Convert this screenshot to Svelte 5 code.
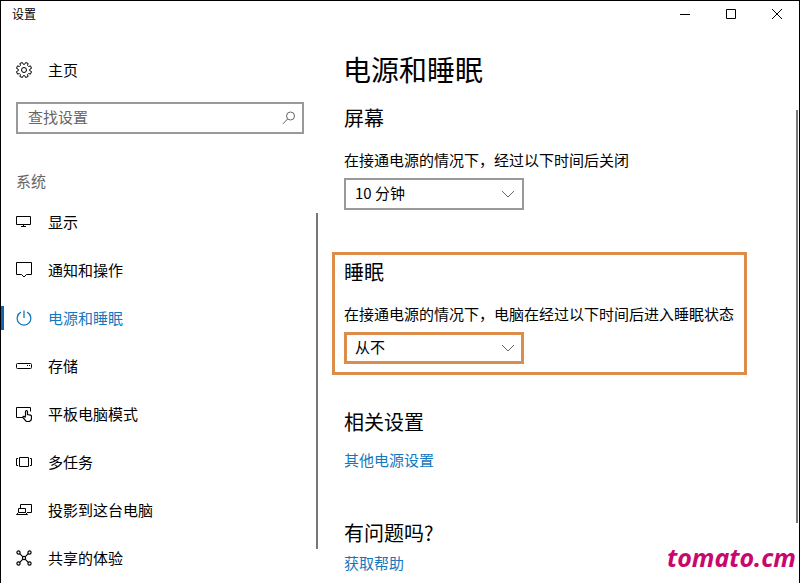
<script>
  let query = $state('');
  let screenOff = $state('10 分钟');
  let sleepAfter = $state('从不');
  let active = $state('power');

  const items = [
    { id: 'display', label: '显示' },
    { id: 'notify', label: '通知和操作' },
    { id: 'power', label: '电源和睡眠' },
    { id: 'storage', label: '存储' },
    { id: 'tablet', label: '平板电脑模式' },
    { id: 'multitask', label: '多任务' },
    { id: 'project', label: '投影到这台电脑' },
    { id: 'shared', label: '共享的体验' }
  ];
  const times = ['10 分钟', '15 分钟', '30 分钟', '从不'];
  const gear = Array.from({ length: 8 }, (_, i) => i)
    .flatMap((i) =>
      [[-15, 5.8], [-10, 7.7], [10, 7.7], [15, 5.8]].map(([d, r]) => {
        const a = ((i * 45 + 22.5 + d) * Math.PI) / 180;
        return `${(8 + r * Math.cos(a)).toFixed(2)},${(8 + r * Math.sin(a)).toFixed(2)}`;
      })
    )
    .join(' ');
</script>

{#snippet icon(id)}
  <svg class="icon" viewBox="0 0 16 16" aria-hidden="true">
    {#if id === 'home'}
      <polygon points={gear} stroke-linejoin="round" />
      <circle cx="8" cy="8" r="2.5" />
    {:else if id === 'display'}
      <path d="M.5 2.5h14v8H.5zM7.5 10.500v2M5 12.500h5" />
    {:else if id === 'notify'}
      <path d="M.5 .5h15v12H10.500l-2.500 2.500-2.500-2.500H.5z" />
    {:else if id === 'power'}
      <path d="M8 .5v7.500M5 2.200a6.800 6.800 0 1 0 6 0" stroke-width="1.300" />
    {:else if id === 'storage'}
      <rect x=".5" y="5.500" width="15" height="5" rx="1" />
      <path d="M11 7.500h1M13 7.500h1" />
    {:else if id === 'tablet'}
      <path d="M7 11.500H.5v-10h14v4" />
      <path d="M9.500 10.500V5.500q0-1 1-1t1 1v3l3 .6q1 .3 1 1.400v2q0 3-3 3h-1q-1.500 0-2.300-1.300L7 11.600q-.3-1 .6-1.200.8-.1 1.900 1.100" stroke-width="1.200" />
    {:else if id === 'multitask'}
      <path d="M3.500 3.500h9v9h-9zM2 4.500H.5v7H2M14 4.500h1.500v7H14" />
    {:else if id === 'project'}
      <path d="M4.500 6.500v-4h11v8H11M2.500 6.500h7v4h-7zM2.500 10.500L.5 12.500h11L9.500 10.500" />
    {:else}
      <g stroke-width="1.200">
        <path d="M3.700 3.700l3 3M12.300 3.700L9.300 6.700M3.700 12.300l3-3M12.300 12.300L9.300 9.300" />
        <circle cx="8" cy="8" r="1.600" />
        <circle cx="2.500" cy="2.500" r="1.600" />
        <circle cx="13.500" cy="2.500" r="1.600" />
        <circle cx="2.500" cy="13.500" r="1.600" />
        <circle cx="13.500" cy="13.500" r="1.600" />
      </g>
    {/if}
  </svg>
{/snippet}

{#snippet chevron()}
  <svg class="chevron" viewBox="0 0 14 8" aria-hidden="true"><path d="M1 1l6 6 6-6" /></svg>
{/snippet}

<div class="window">
  <header>
    <span class="caption">设置</span>
    <button aria-label="最小化"><svg viewBox="0 0 10 10"><path d="M0 5.500h10" /></svg></button>
    <button aria-label="最大化"><svg viewBox="0 0 10 10"><path d="M.5 .5h9v9h-9z" /></svg></button>
    <button aria-label="关闭"><svg viewBox="0 0 10 10"><path d="M0 0l10 10M10 0L0 10" /></svg></button>
  </header>

  <div class="body">
    <aside>
      <a class="row home" href="#home">{@render icon('home')}<span>主页</span></a>
      <div class="search">
        <input type="text" placeholder="查找设置" aria-label="查找设置" bind:value={query} />
        <svg viewBox="0 0 14 14" aria-hidden="true"><circle cx="8.500" cy="5" r="4" /><path d="M5.700 7.900L.8 13" /></svg>
      </div>
      <h2 class="group">系统</h2>
      <div class="list">
        <nav>
          {#each items as item}
            <a
              class="row"
              class:active={active === item.id}
              href={'#' + item.id}
              onclick={() => (active = item.id)}
            >{@render icon(item.id)}<span>{item.label}</span></a>
          {/each}
        </nav>
        <div class="thumb"></div>
      </div>
    </aside>

    <main>
      <div class="content">
        <h1>电源和睡眠</h1>
        <section>
          <h2>屏幕</h2>
          <label for="screen">在接通电源的情况下，经过以下时间后关闭</label>
          <div class="field">
            <select id="screen" bind:value={screenOff}>
              {#each times as t}<option>{t}</option>{/each}
            </select>
            {@render chevron()}
          </div>
        </section>
        <section class="marked">
          <h2>睡眠</h2>
          <label for="sleep">在接通电源的情况下，电脑在经过以下时间后进入睡眠状态</label>
          <div class="field">
            <select id="sleep" bind:value={sleepAfter}>
              {#each times as t}<option>{t}</option>{/each}
            </select>
            {@render chevron()}
          </div>
        </section>
        <section class="related">
          <h2>相关设置</h2>
          <a href="#more">其他电源设置</a>
        </section>
        <section class="help">
          <h2>有问题吗?</h2>
          <a href="#help">获取帮助</a>
        </section>
      </div>
      <div class="thumb"></div>
    </main>
  </div>
  <div class="watermark">tomato.cm</div>
</div>

<style>
  .window {
    position: relative;
    box-sizing: border-box;
    height: 100vh;
    display: flex;
    flex-direction: column;
    overflow: hidden;
    border: 1px solid #000;
    border-bottom: 0;
    background: #fff;
    color: #000;
    font: 15px/20px 'Noto Sans CJK SC', sans-serif;
  }
  h1, h2 { margin: 0; font-weight: 400; }
  a { color: #1478be; text-decoration: none; }
  svg { fill: none; stroke: currentColor; stroke-width: 1; flex: none; }

  header { display: flex; align-items: center; height: 26px; flex: none; }
  .caption { flex: 1; padding-left: 11px; font-size: 12px; }
  header button {
    box-sizing: border-box;
    width: 46px;
    height: 26px;
    padding: 0 0 0 2px;
    border: 0;
    background: none;
    color: #000;
    display: flex;
    align-items: center;
    justify-content: center;
  }
  header svg { width: 10px; height: 10px; }

  .body { flex: 1; min-height: 0; display: flex; }
  aside {
    width: 317px;
    flex: none;
    display: flex;
    flex-direction: column;
    min-height: 0;
  }
  .row {
    display: flex;
    align-items: center;
    gap: 16px;
    height: 48px;
    box-sizing: border-box;
    padding-left: 12px;
    border-left: 3px solid transparent;
    color: #000;
    flex: none;
  }
  .home { margin-top: 19px; }
  .icon { width: 16px; height: 16px; }
  .active {
    color: #1478be;
    border-image: linear-gradient(transparent 12px, #1464b4 12px, #1464b4 36px, transparent 36px) 0 0 0 3;
  }
  .search {
    margin: 8px 14px 0 15px;
    height: 32px;
    box-sizing: border-box;
    border: 2px solid #999;
    display: flex;
    align-items: center;
    padding: 0 6px 0 10px;
    flex: none;
  }
  .search input {
    flex: 1;
    min-width: 0;
    padding: 0 0 2px;
    border: 0;
    outline: 0;
    background: none;
    font: inherit;
    color: #000;
  }
  .search input::placeholder { color: #666; opacity: 1; }
  .search svg { width: 14px; height: 14px; color: #666; }
  .group { margin: 37px 0 7px 15px; font-size: 15px; line-height: 20px; color: #666; }
  .list { flex: 1; min-height: 0; display: flex; }
  nav { flex: 1; overflow: hidden; }
  .thumb { width: 2px; flex: none; background: #777; }
  .list .thumb { margin: 15px 0 34px; }

  main { flex: 1; min-width: 0; display: flex; }
  .content { flex: 1; min-width: 0; padding: 22px 49px 0 25px; overflow: hidden; }
  main .thumb { margin: 83px 1px 60px 0; }
  h1 { font-size: 28px; line-height: 40px; margin-bottom: 15px; }
  section { padding-left: 1px; }
  section h2 { font-size: 20px; line-height: 28px; }
  label { display: block; margin: 18px 0 8px; }
  section a { display: block; }
  .field { position: relative; width: 180px; }
  select {
    display: block;
    appearance: none;
    box-sizing: border-box;
    width: 100%;
    height: 32px;
    padding: 0 30px 2px 9px;
    border: 2px solid #999;
    border-radius: 0;
    background: #fff;
    color: #000;
    font: inherit;
  }
  .chevron {
    position: absolute;
    right: 9px;
    top: 12px;
    width: 14px;
    height: 8px;
    color: #666;
    pointer-events: none;
  }
  .marked {
    margin: 42px 0 33px -11px;
    padding: 3px 0 8px 9px;
    border: 3px solid #dc8d4c;
  }
  .marked label { white-space: nowrap; }
  .marked select { border: 3px solid #dc8d4c; padding-left: 8px; }
  .related a { margin-top: 14px; }
  .help { margin-top: 49px; }
  .help a { margin-top: 6px; }
  .watermark {
    position: absolute;
    right: 3px;
    bottom: 10px;
    font: italic 700 25px/32px 'Noto Sans', sans-serif;
    color: #c8086c;
  }
</style>
